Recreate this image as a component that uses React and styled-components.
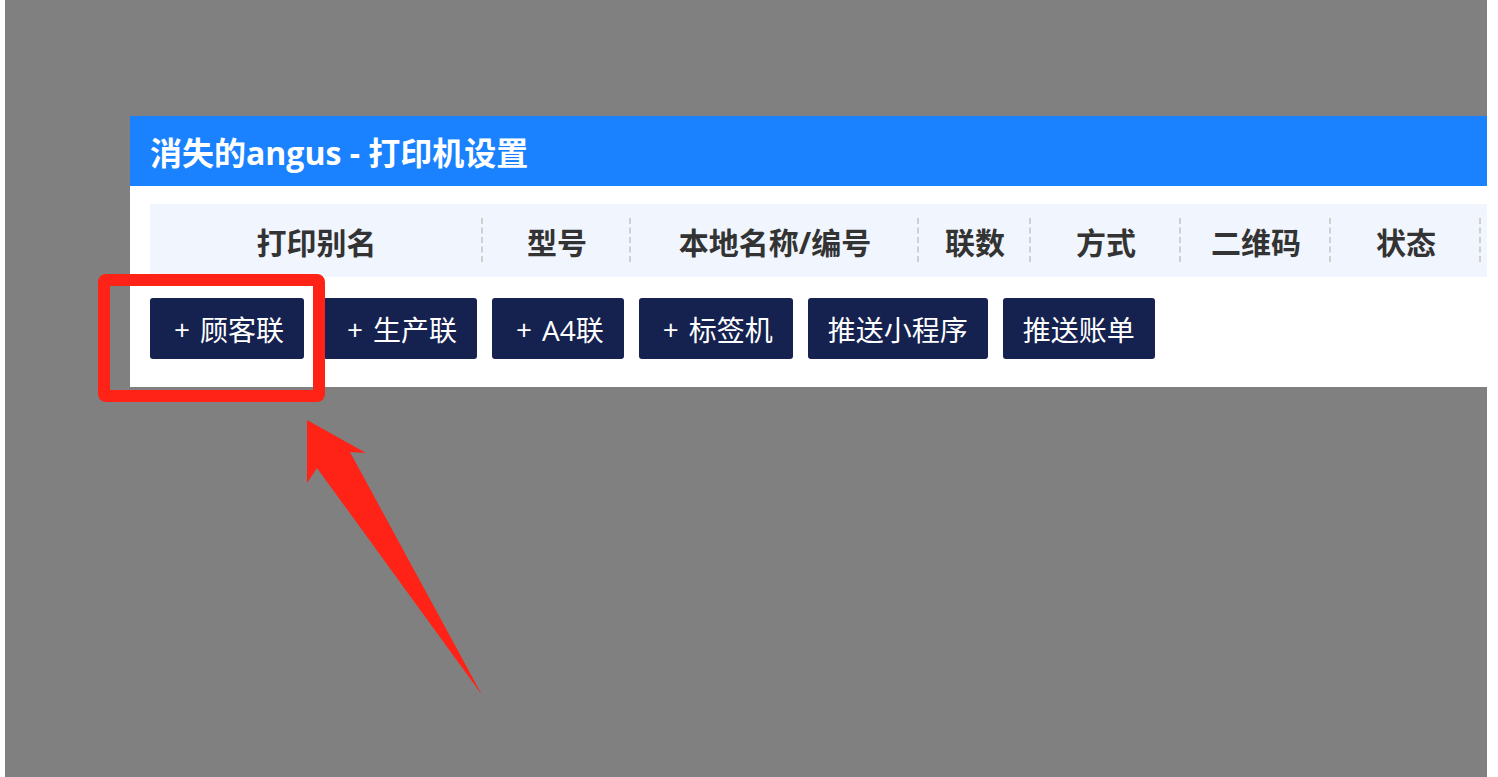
import React from 'react'
import styled, { createGlobalStyle } from 'styled-components'

const columns = [
    { label: '打印别名', width: 333 },
    { label: '型号', width: 148 },
    { label: '本地名称/编号', width: 288 },
    { label: '联数', width: 112 },
    { label: '方式', width: 150 },
    { label: '二维码', width: 150 },
    { label: '状态', width: 150 },
    { label: '', width: 200 },
]

const actions = [
    { text: '顾客联', plus: true, wide: true },
    { text: '生产联', plus: true },
    { text: 'A4联', plus: true },
    { text: '标签机', plus: true },
    { text: '推送小程序' },
    { text: '推送账单' },
]

const App = () => {
    return (
        <>
            <GlobalStyle />
            <Screen>
                <Panel>
                    <PanelHeader>消失的angus - 打印机设置</PanelHeader>
                    <PanelBody>
                        <TableHead>
                            {columns.map((c, i) => (
                                <HeadCell key={i} $width={c.width}>{c.label}</HeadCell>
                            ))}
                        </TableHead>
                        <ButtonRow>
                            {actions.map((a) => (
                                <ActionButton key={a.text} $wide={a.wide}>
                                    {a.plus && <Plus>+</Plus>}
                                    {a.text}
                                </ActionButton>
                            ))}
                        </ButtonRow>
                    </PanelBody>
                </Panel>

                <Highlight />
                <Arrow width="190" height="285" viewBox="0 0 190 285">
                    <polygon points="7,5 66,38 50,37 182,280 17,53 7,68" fill="#ff2217" />
                </Arrow>
            </Screen>
        </>
    )
}

export default App

const GlobalStyle = createGlobalStyle`
    html, body {
        margin: 0;
        padding: 0;
        background: #ffffff;
    }
    body {
        font-family: "Open Sans", "Noto Sans CJK SC", sans-serif;
    }
    * {
        box-sizing: border-box;
    }
`

const Screen = styled.div`
    position: relative;
    margin-left: 5px;
    width: 1482px;
    height: 777px;
    background: #808080;
    padding: 116px 0 0 125px;
    overflow: hidden;
`

const Panel = styled.div`
    width: 1357px;
    background: #ffffff;
    overflow: hidden;
`

const PanelHeader = styled.div`
    height: 70px;
    background: #1a82ff;
    color: #ffffff;
    display: flex;
    align-items: center;
    padding-left: 20px;
    font-size: 32px;
    font-weight: 700;
    white-space: nowrap;
`

const PanelBody = styled.div`
    padding: 18px 0 28px 20px;
`

const TableHead = styled.div`
    display: flex;
    height: 73px;
    background: #f0f5fe;
    overflow: hidden;
`

const HeadCell = styled.div`
    position: relative;
    flex: 0 0 ${(p) => p.$width}px;
    display: flex;
    align-items: center;
    justify-content: center;
    font-size: 30px;
    font-weight: 700;
    color: #333333;
    white-space: nowrap;

    &::after {
        content: '';
        position: absolute;
        right: 0;
        top: 14px;
        bottom: 15px;
        border-right: 2px dashed #cfcfcf;
    }
`

const ButtonRow = styled.div`
    display: flex;
    gap: 15px;
    margin-top: 21px;
`

const ActionButton = styled.button`
    height: 61px;
    padding: 0 20px;
    margin-right: ${(p) => (p.$wide ? '4px' : '0')};
    display: flex;
    align-items: center;
    background: #15214f;
    color: #ffffff;
    border: none;
    border-radius: 3px;
    font-family: "Open Sans", "Noto Sans CJK SC", sans-serif;
    font-size: 28px;
    white-space: nowrap;
    cursor: pointer;
`

const Plus = styled.span`
    margin: 0 10px 0 4px;
`

const Highlight = styled.div`
    position: absolute;
    left: 93px;
    top: 274px;
    width: 227px;
    height: 128px;
    border: 12px solid #ff2217;
    border-radius: 8px;
`

const Arrow = styled.svg`
    position: absolute;
    left: 295px;
    top: 415px;
`
